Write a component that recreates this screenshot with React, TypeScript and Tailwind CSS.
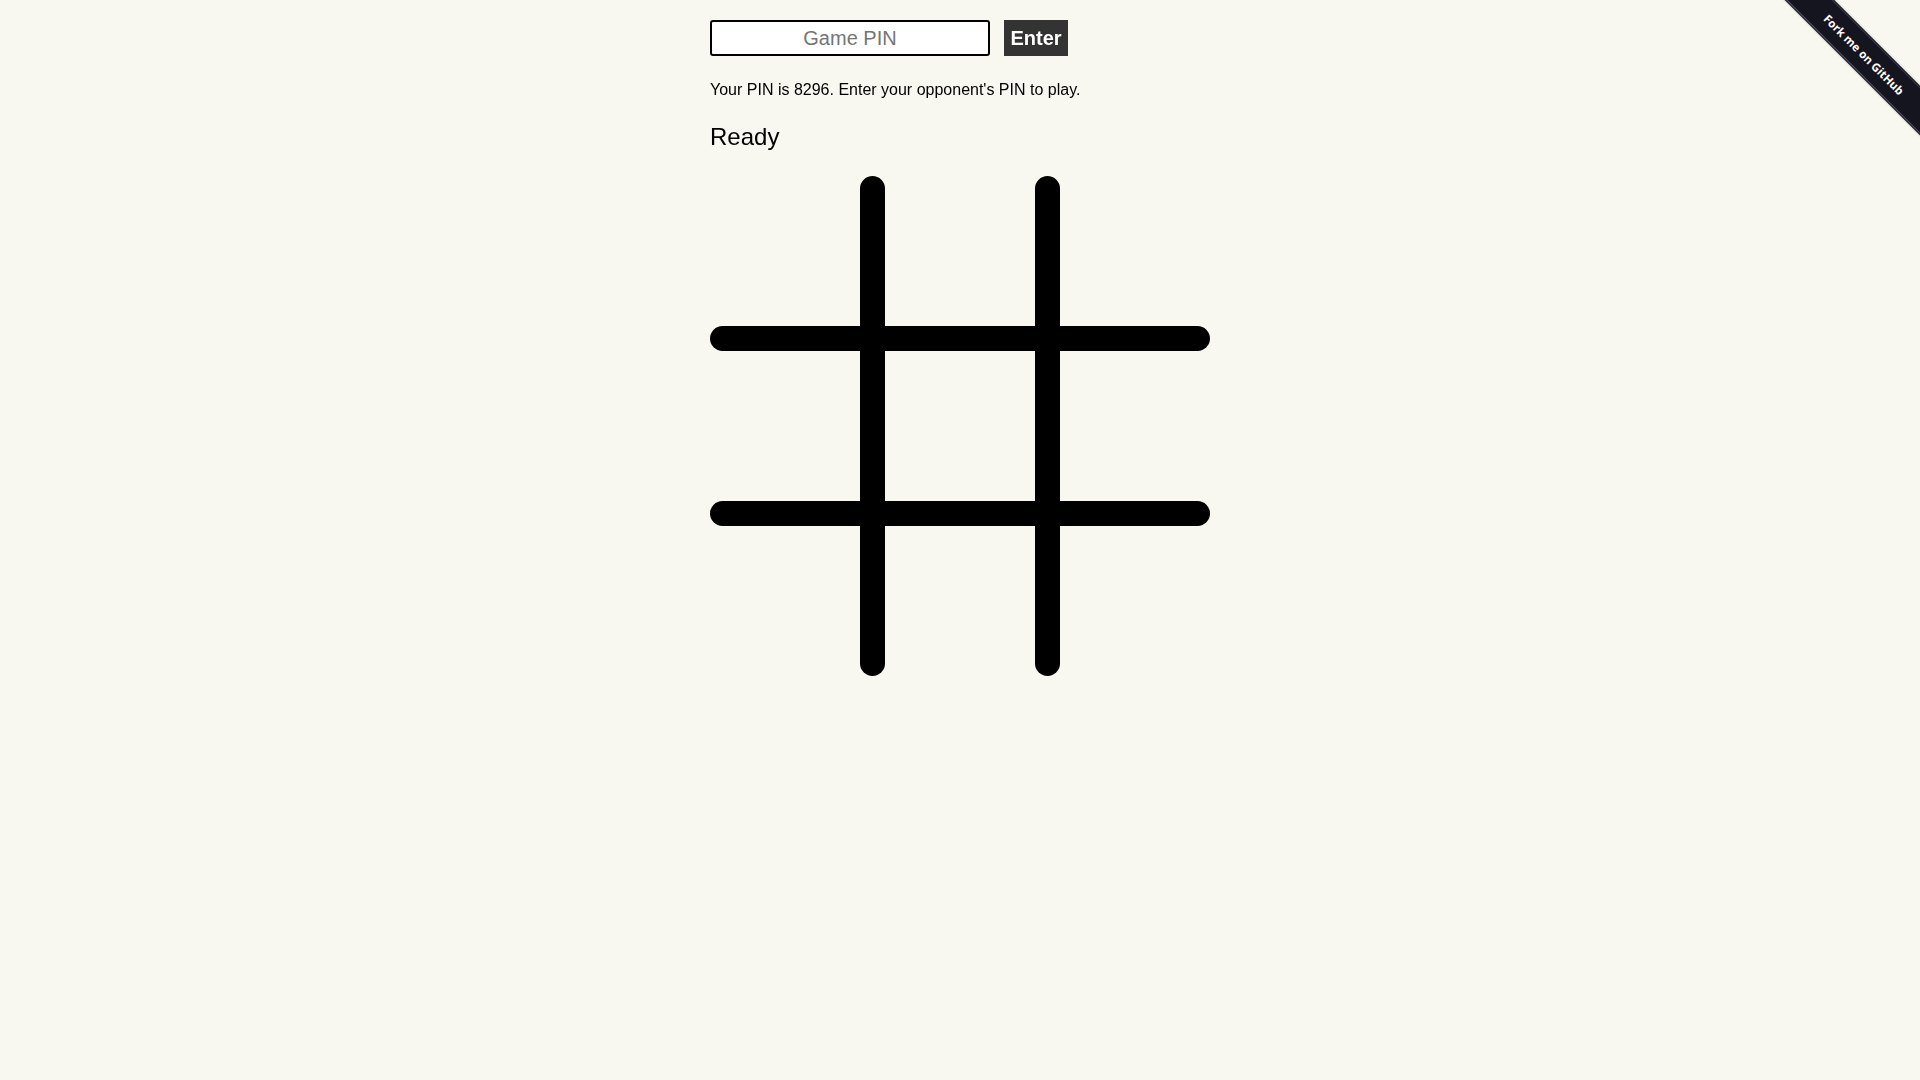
import { useState } from "react";

// Tabuleiro desenhado em SVG: 3 células de 150px separadas por traços de 25px
function Board() {
  const lines = [162.5, 337.5];
  return (
    <svg width="500" height="500" viewBox="0 0 500 500" className="block">
      {lines.map((p) => (
        <g key={p} stroke="#000" strokeWidth="25" strokeLinecap="round">
          <line x1={p} y1={12.5} x2={p} y2={487.5} />
          <line x1={12.5} y1={p} x2={487.5} y2={p} />
        </g>
      ))}
    </svg>
  );
}

function ForkRibbon() {
  return (
    <div className="absolute top-0 right-0 w-[150px] h-[150px] overflow-hidden pointer-events-none">
      <a
        href="#"
        className="pointer-events-auto absolute left-[-16px] top-[36.5px] w-[220px] h-[35px] rotate-45 bg-[#151520] flex items-center justify-center shadow-[0_0_2px_rgba(0,0,0,0.4)]"
      >
        <span className="absolute inset-x-0 top-[1px] h-px bg-[#3a3a48]" />
        <span className="absolute inset-x-0 bottom-[1px] h-px bg-[#5a5a66]" />
        <span className="text-white text-[11.5px] font-bold leading-none font-['Open_Sans',sans-serif]">
          Fork me on GitHub
        </span>
      </a>
    </div>
  );
}

export default function App() {
  const [pin, setPin] = useState("");
  const myPin = 8296;

  return (
    <div className="relative min-h-screen bg-[#f8f8f0] text-black font-['Liberation_Sans',Arial,sans-serif] overflow-hidden">
      <ForkRibbon />
      <div className="w-[500px] mx-auto pt-[20px]">
        <div className="flex items-center gap-[14px]">
          <input
            autoFocus
            value={pin}
            onChange={(e) => setPin(e.target.value)}
            placeholder="Game PIN"
            className="w-[280px] h-[36px] bg-white border-2 border-black rounded-[3px] text-center text-[20px] text-black placeholder:text-[#757575] outline-none font-['Liberation_Sans',Arial,sans-serif]"
          />
          <button className="h-[36px] w-[64px] bg-[#333333] text-white text-[20px] font-bold">
            Enter
          </button>
        </div>
        <p className="mt-[25px] text-[16px] leading-[18px]">
          Your PIN is {myPin}. Enter your opponent's PIN to play.
        </p>
        <h2 className="mt-[24px] text-[24px] leading-[28px]">Ready</h2>
        <div className="mt-[25px]">
          <Board />
        </div>
      </div>
    </div>
  );
}
